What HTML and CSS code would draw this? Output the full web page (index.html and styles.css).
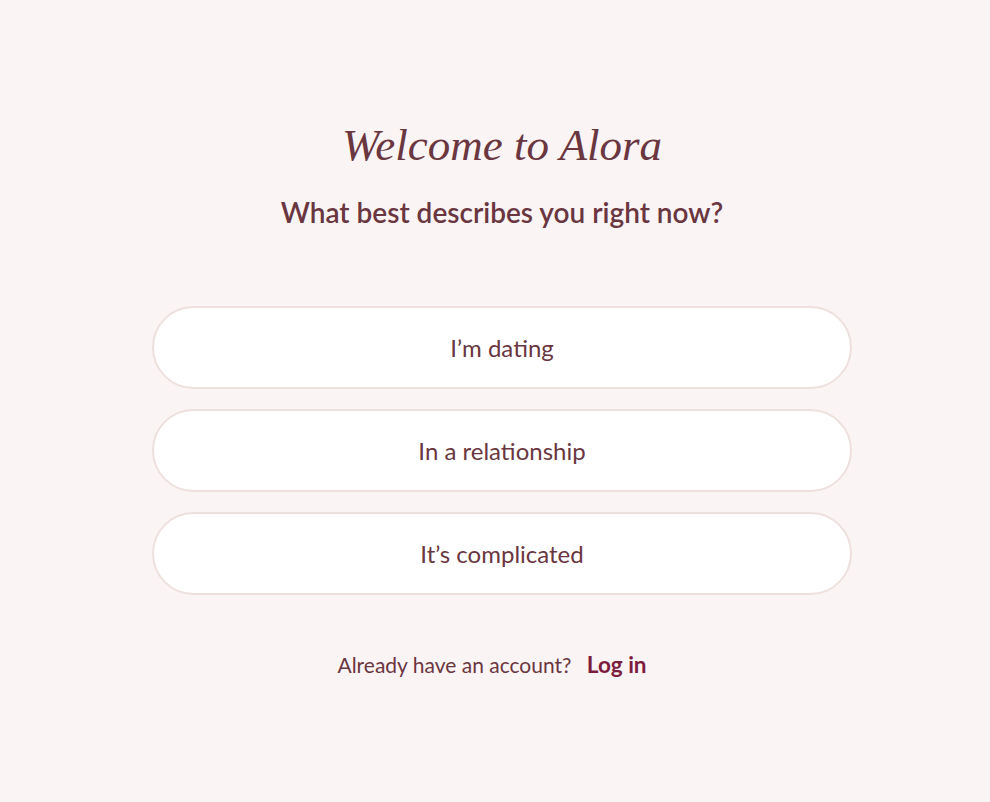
FILE: index.html
```html
<!DOCTYPE html>
<html lang="en">
<head>
<meta charset="utf-8">
<title>Welcome to Alora</title>
<link rel="stylesheet" href="styles.css">
</head>
<body>
<main class="page">
  <h1 class="title">Welcome to Alora</h1>
  <h2 class="subtitle">What best describes you right now?</h2>
  <div class="options">
    <button class="option">I’m dating</button>
    <button class="option">In a relationship</button>
    <button class="option">It’s complicated</button>
  </div>
  <p class="footer">Already have an account? <a class="login" href="#">Log in</a></p>
</main>
</body>
</html>
```
FILE: styles.css
```css
html, body {
  margin: 0;
  padding: 0;
  background: #faf4f4;
  height: 100%;
}
.page {
  display: flex;
  flex-direction: column;
  align-items: center;
  padding: 114px 0 0 14px;
  font-family: Lato, "Noto Sans", sans-serif;
  color: #6a3640;
}
.title {
  margin: 0;
  font-family: "Liberation Serif", serif;
  font-style: italic;
  font-weight: 400;
  font-size: 45px;
  line-height: 62px;
  color: #6a3640;
}
.subtitle {
  margin: 16px 0 0;
  font-weight: 600;
  font-size: 28px;
  line-height: 40px;
  color: #6a3640;
}
.options {
  display: flex;
  flex-direction: column;
  gap: 20px;
  width: 700px;
  margin-top: 74px;
}
.option {
  height: 83px;
  border: 2px solid #eee0dd;
  border-radius: 42px;
  background: #ffffff;
  font-family: Lato, "Noto Sans", sans-serif;
  font-size: 24px;
  color: #6a3640;
  cursor: pointer;
}
.footer {
  margin: 56px 0 0;
  font-size: 21px;
  line-height: 28px;
  color: #6a3640;
}
.login {
  display: inline-block;
  margin-left: 10px;
  padding-right: 20px;
  font-size: 22.5px;
  font-weight: 700;
  color: #7c1d3e;
  text-decoration: none;
}
```
